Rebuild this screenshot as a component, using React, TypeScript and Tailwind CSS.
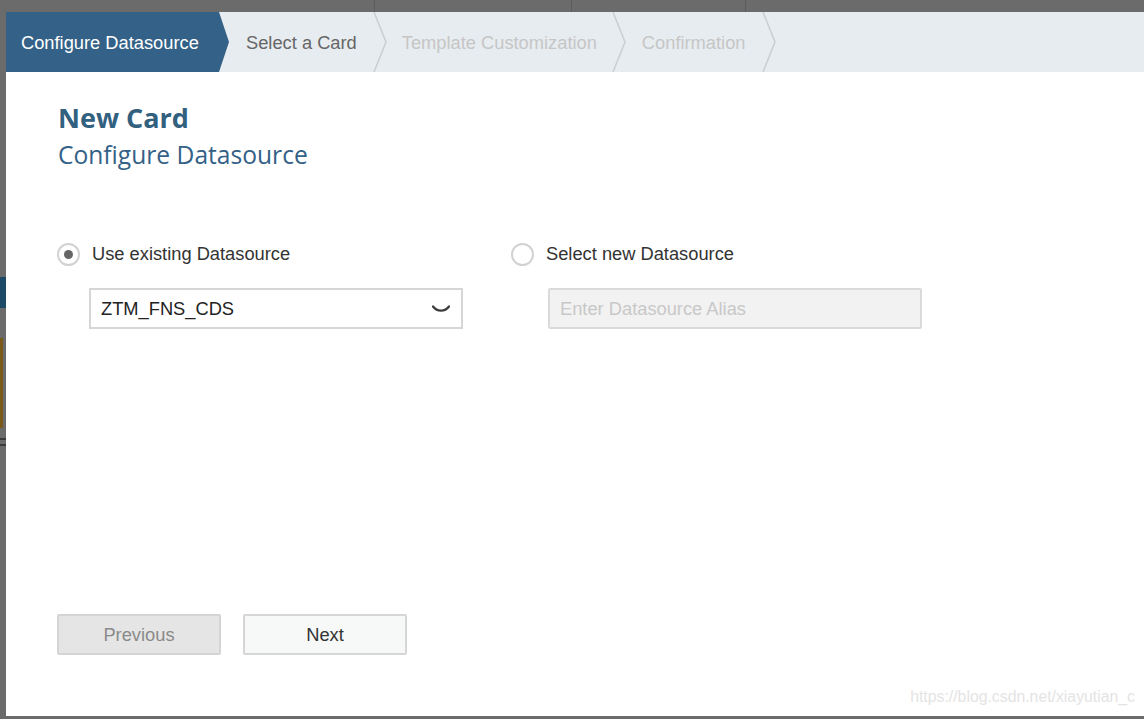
import React from 'react';

// Wizard steps shown in the dialog header
const steps = ['Configure Datasource', 'Select a Card', 'Template Customization', 'Confirmation'];

const Chevron: React.FC = () => (
  <svg width="14" height="60" viewBox="0 0 14 60" className="shrink-0">
    <polyline points="1,0 13,30 1,60" fill="none" stroke="#c9ced3" strokeWidth="1.5" />
  </svg>
);

const Radio: React.FC<{ checked?: boolean }> = ({ checked }) => (
  <span className="w-[23px] h-[23px] rounded-full border-2 border-[#d2d2d2] bg-white flex items-center justify-center shrink-0">
    {checked && <span className="w-[9px] h-[9px] rounded-full bg-[#666]" />}
  </span>
);

const App: React.FC = () => {
  return (
    <div className="w-[1144px] h-[719px] bg-[#6b6b6b] flex flex-col overflow-hidden font-['Liberation_Sans',Arial,sans-serif]">
      {/* page behind the overlay, top strip */}
      <div className="h-[12px] flex shrink-0">
        <div className="w-[375px] border-r border-[#5c5c5c]" />
        <div className="w-[197px] border-r border-[#5c5c5c]" />
        <div className="w-[174px] border-r border-[#5c5c5c]" />
      </div>

      <div className="flex flex-1 min-h-0">
        {/* page behind the overlay, left strip */}
        <div className="w-[6px] shrink-0 flex flex-col">
          <div className="h-[265px]" />
          <div className="h-[31px] bg-[#1d4a66]" />
          <div className="h-[30px]" />
          <div className="h-[90px] border-l-[3px] border-[#7a5a1a]" />
          <div className="h-[10px]" />
          <div className="h-[2px] bg-[#3a3a3a]" />
          <div className="h-[4px]" />
          <div className="h-[2px] bg-[#3a3a3a]" />
        </div>

        {/* dialog */}
        <div className="relative flex-1 bg-white flex flex-col">
          {/* wizard header */}
          <div className="h-[60px] bg-[#e7ecf0] flex items-center shrink-0 text-[18.3px]">
            <div className="h-full flex items-center shrink-0">
              <div className="h-full w-[212px] bg-[#346187] flex items-center pl-[15px] pt-[1px] text-white whitespace-nowrap">
                {steps[0]}
              </div>
              <svg width="12" height="60" viewBox="0 0 12 60" className="shrink-0">
                <polygon points="0,0 1,0 11,30 1,60 0,60" fill="#346187" />
              </svg>
            </div>
            <span className="ml-[16px] pt-[1px] text-[#666] whitespace-nowrap">{steps[1]}</span>
            <span className="ml-[16px] flex"><Chevron /></span>
            <span className="ml-[15px] pt-[1px] text-[#c6c6c6] whitespace-nowrap">{steps[2]}</span>
            <span className="ml-[15px] flex"><Chevron /></span>
            <span className="ml-[16px] pt-[1px] text-[#c6c6c6] whitespace-nowrap">{steps[3]}</span>
            <span className="ml-[16px] flex"><Chevron /></span>
          </div>

          {/* body */}
          <div className="flex-1 flex flex-col pl-[51px] pb-[61px]">
            <h1 className="mt-[28px] ml-[1px] text-[27px] leading-[36px] font-bold text-[#32607f] font-['Open_Sans',sans-serif]">
              New Card
            </h1>
            <h2 className="mt-[3px] ml-[1px] text-[24.6px] leading-[32px] text-[#346187] font-['Open_Sans',sans-serif]">
              Configure Datasource
            </h2>

            <div className="mt-[71px] flex">
              <div className="w-[454px] flex flex-col">
                <label className="h-[24px] flex items-center gap-[12px]">
                  <Radio checked />
                  <span className="text-[18.3px] text-[#333]">Use existing Datasource</span>
                </label>
                <div className="mt-[22px] ml-[32px] w-[374px] h-[41px] border-2 border-[#d6d6d6] flex items-center pl-[10px] pr-[11px]">
                  <span className="flex-1 text-[18.3px] text-[#222]">ZTM_FNS_CDS</span>
                  <svg width="18" height="8" viewBox="0 0 18 8">
                    <path d="M1 1.5 C5 7 13 7 17 1.5" fill="none" stroke="#3d3d3d" strokeWidth="2.2" strokeLinecap="round" />
                  </svg>
                </div>
              </div>
              <div className="w-[454px] flex flex-col">
                <label className="h-[24px] flex items-center gap-[12px]">
                  <Radio />
                  <span className="text-[18.3px] text-[#333]">Select new Datasource</span>
                </label>
                <div className="mt-[22px] ml-[37px] w-[374px] h-[41px] rounded-[2px] border-2 border-[#dadada] bg-[#f2f2f2] flex items-center pl-[10px]">
                  <span className="text-[18.3px] text-[#c8c8c8]">Enter Datasource Alias</span>
                </div>
              </div>
            </div>

            <div className="flex-1" />

            <div className="flex gap-[22px]">
              <button className="w-[164px] h-[41px] rounded-[2px] border-2 border-[#d4d4d4] bg-[#e5e5e5] text-[18.3px] text-[#8a8a8a]">
                Previous
              </button>
              <button className="w-[164px] h-[41px] rounded-[2px] border-2 border-[#d6d6d6] bg-[#f7f9f9] text-[18.3px] text-[#333]">
                Next
              </button>
            </div>
          </div>

          {/* screenshot watermark */}
          <span className="absolute right-[9px] bottom-[7px] text-[15.8px] text-[#e4e4e4]">
            https://blog.csdn.net/xiayutian_c
          </span>
        </div>
      </div>

      <div className="h-[3px] shrink-0" />
    </div>
  );
};

export default App;
